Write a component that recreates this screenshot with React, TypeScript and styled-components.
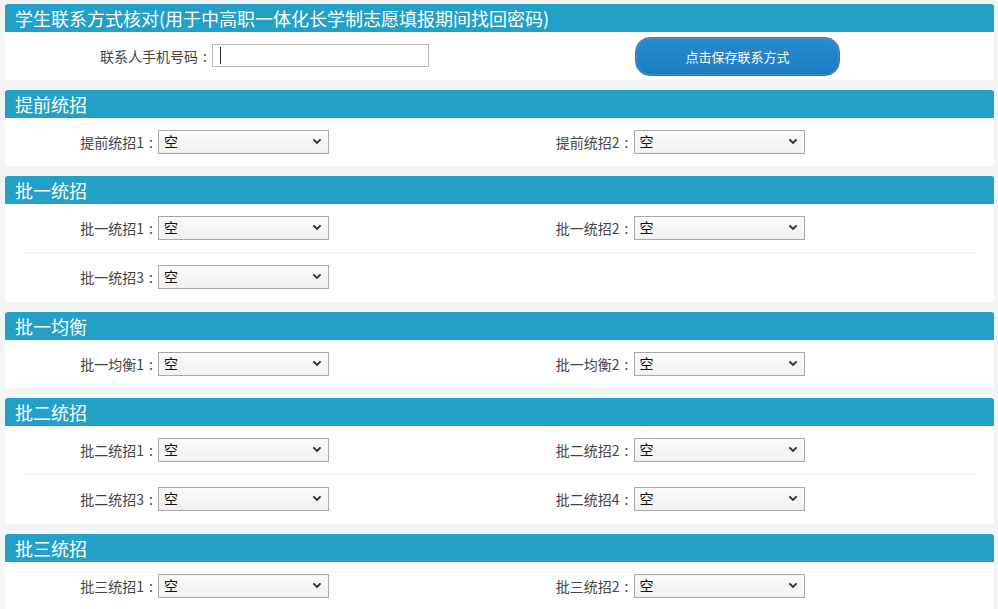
import styled, { createGlobalStyle } from "styled-components";

const GlobalStyle = createGlobalStyle`
  html, body {
    margin: 0;
    padding: 0;
    background: #f3f4f6;
    font-family: "Noto Sans CJK SC", "Liberation Sans", sans-serif;
    text-spacing-trim: space-all;
  }
`;

type Section = {
  title: string;
  fields: string[];
};

const sections: Section[] = [
  { title: "提前统招", fields: ["提前统招1", "提前统招2"] },
  { title: "批一统招", fields: ["批一统招1", "批一统招2", "批一统招3"] },
  { title: "批一均衡", fields: ["批一均衡1", "批一均衡2"] },
  { title: "批二统招", fields: ["批二统招1", "批二统招2", "批二统招3", "批二统招4"] },
  { title: "批三统招", fields: ["批三统招1", "批三统招2"] },
];

const Chevron = () => (
  <ChevronIcon width="10" height="7" viewBox="0 0 10 7">
    <path d="M1.4 1.4 L5 4.9 L8.6 1.4" fill="none" stroke="#333" strokeWidth="2" />
  </ChevronIcon>
);

const SelectField = ({ label }: { label: string }) => {
  return (
    <Field>
      <Label>
        {label}
        <Colon>:</Colon>
      </Label>
      <SelectBox>
        <Select defaultValue="">
          <option value="">空</option>
        </Select>
        <Chevron />
      </SelectBox>
    </Field>
  );
};

const chunk = (list: string[]) => {
  const rows: string[][] = [];
  for (let i = 0; i < list.length; i += 2) rows.push(list.slice(i, i + 2));
  return rows;
};

const App = () => {
  return (
    <Page>
      <GlobalStyle />
      <Panel>
        <Header>学生联系方式核对(用于中高职一体化长学制志愿填报期间找回密码)</Header>
        <Body>
          <ContactRow>
            <PhoneLabel>
              联系人手机号码<Colon>:</Colon>
            </PhoneLabel>
            <InputBox>
              <PhoneInput type="text" />
              <Caret />
            </InputBox>
            <SaveButton type="button">点击保存联系方式</SaveButton>
          </ContactRow>
        </Body>
      </Panel>
      {sections.map((s) => (
        <Panel key={s.title}>
          <Header>{s.title}</Header>
          <Body>
            {chunk(s.fields).map((row) => (
              <Row key={row[0]}>
                {row.map((f) => (
                  <SelectField key={f} label={f} />
                ))}
              </Row>
            ))}
          </Body>
        </Panel>
      ))}
    </Page>
  );
};

export default App;

const Page = styled.div`
  padding: 4px 4px 0 5px;
  height: 605px;
  overflow: hidden;
`;

const Panel = styled.section`
  background: #ffffff;
  border-radius: 3px;
  margin-bottom: 10px;
  overflow: hidden;
`;

const Header = styled.div`
  height: 28px;
  line-height: 28px;
  padding-left: 10px;
  background: #22a0c8;
  color: #ffffff;
  font-size: 18px;
  white-space: nowrap;
`;

const Body = styled.div`
  padding: 0 19px;
`;

const Row = styled.div`
  display: grid;
  grid-template-columns: 1fr 1fr;
  box-sizing: border-box;
  height: 48px;
  align-items: center;
  & + & {
    border-top: 1px solid #ededed;
    height: 50px;
    padding-bottom: 2px;
  }
`;

const Field = styled.div`
  display: flex;
  align-items: center;
  height: 24px;
`;

const Label = styled.span`
  width: 134px;
  text-align: right;
  font-size: 14px;
  line-height: 20px;
  color: #444;
  white-space: nowrap;
`;

const Colon = styled.span`
  display: inline-block;
  width: 14px;
  text-align: center;
`;

const SelectBox = styled.div`
  position: relative;
  width: 171px;
  height: 24px;
`;

const Select = styled.select`
  appearance: none;
  display: block;
  width: 100%;
  height: 100%;
  box-sizing: border-box;
  border: 1px solid #a9a9a9;
  border-radius: 0;
  background: linear-gradient(#fbfbfb, #f1f1f1);
  font-family: "Noto Sans CJK SC", "Liberation Sans", sans-serif;
  font-size: 14px;
  color: #111;
  padding: 0 0 3px 5px;
  outline: none;
`;

const ChevronIcon = styled.svg`
  position: absolute;
  right: 7px;
  top: 8px;
  pointer-events: none;
`;

const ContactRow = styled.div`
  display: flex;
  align-items: center;
  height: 48px;
`;

const PhoneLabel = styled.span`
  width: 188px;
  text-align: right;
  font-size: 14px;
  line-height: 20px;
  color: #444;
  white-space: nowrap;
`;

const InputBox = styled.div`
  position: relative;
  width: 217px;
  height: 23px;
  margin-top: -2px;
`;

const PhoneInput = styled.input`
  display: block;
  width: 100%;
  height: 100%;
  box-sizing: border-box;
  border: 1px solid #b9b9b9;
  padding: 0 6px;
  font-size: 14px;
  outline: none;
`;

const Caret = styled.span`
  position: absolute;
  left: 8px;
  top: 3px;
  width: 1px;
  height: 17px;
  background: #222;
`;

const SaveButton = styled.button`
  margin-left: 206px;
  width: 205px;
  height: 39px;
  border-radius: 15px;
  border: 1px solid #4a7090;
  background: linear-gradient(#2a8ad0, #1c7cc0);
  box-shadow: inset 0 0 0 1px rgba(255, 255, 255, 0.15);
  color: #ffffff;
  font-family: "Noto Sans CJK SC", "Liberation Sans", sans-serif;
  font-size: 13px;
  cursor: pointer;
`;
